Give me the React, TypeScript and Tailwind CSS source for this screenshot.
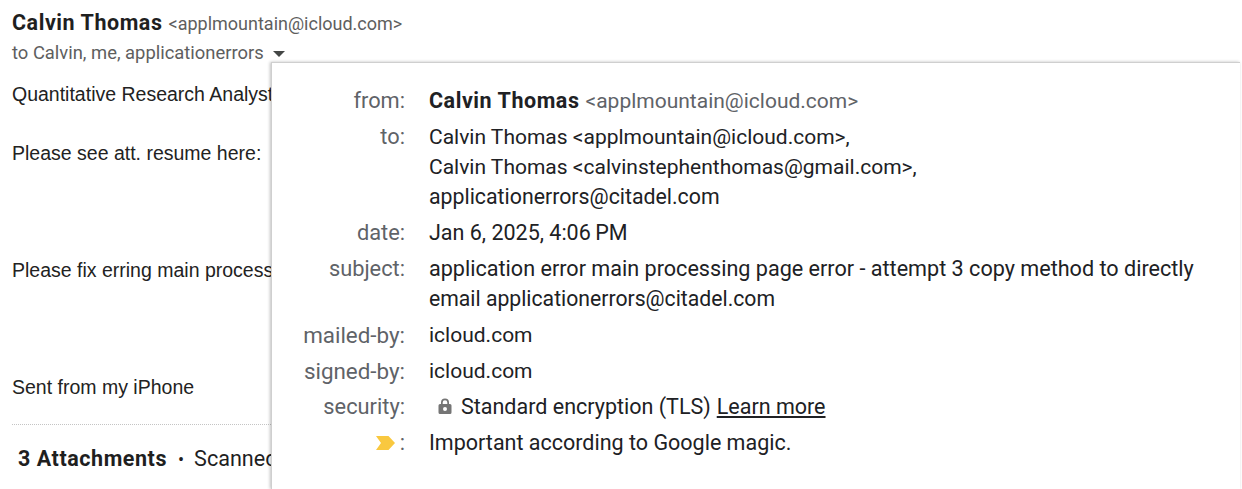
const ROWS = [
  {
    label: 'to:',
    lines: [
      { text: 'Calvin Thomas <applmountain@icloud.com>,', size: 'text-[21px]' },
      { text: 'Calvin Thomas <calvinstephenthomas@gmail.com>,', size: 'text-[21px]' },
      { text: 'applicationerrors@citadel.com', size: 'text-[21.3px]' },
    ],
  },
  { label: 'date:', lines: [{ text: 'Jan 6, 2025, 4:06\u2009PM', size: 'text-[21.5px]' }] },
  {
    label: 'subject:',
    lines: [
      { text: 'application error main processing page error - attempt 3 copy method to directly', size: 'text-[21.6px]' },
      { text: 'email applicationerrors@citadel.com', size: 'text-[21.2px]' },
    ],
  },
  { label: 'mailed-by:', lines: [{ text: 'icloud.com', size: 'text-[21px]' }] },
  { label: 'signed-by:', lines: [{ text: 'icloud.com', size: 'text-[21px]' }] },
];

function Row({ label, children }: { label: React.ReactNode; children: React.ReactNode }) {
  return (
    <div className="flex">
      <div className="w-[133px] shrink-0 flex justify-end items-center h-[30px] text-[21.8px] text-[#5f6368] whitespace-nowrap">{label}</div>
      <div className="pl-[24px] text-[21.5px] text-[#202124]">{children}</div>
    </div>
  );
}

export default function App() {
  return (
    <div className="relative w-[1242px] h-[489px] overflow-hidden bg-white font-['Liberation_Sans',sans-serif]">
      {/* Message behind the popup */}
      <div className="pl-[12px] pt-[7px] w-[271px] whitespace-nowrap text-[#222222] text-[19.5px]">
        <div className="flex items-baseline h-[26px] font-['Roboto',sans-serif]">
          <span className="text-[21.5px] font-bold tracking-[0.55px] text-[#1f1f1f]">Calvin Thomas</span>
          <span className="ml-[6px] text-[18px] text-[#5e5e5e]">&lt;applmountain@icloud.com&gt;</span>
        </div>
        <div className="flex items-center h-[28px] mt-[6px] font-['Roboto',sans-serif] text-[18.4px] text-[#5e5e5e]">
          to Calvin, me, applicationerrors
          <span className="ml-[9px] mt-[2px] border-x-[6px] border-t-[6px] border-x-transparent border-t-[#444746]" />
        </div>
        <div className="mt-[13px] h-[28px] leading-[28px]">Quantitative Research Analyst</div>
        <div className="mt-[31px] h-[28px] leading-[28px]">Please see att. resume here:</div>
        <div className="mt-[89px] h-[28px] leading-[28px]">Please fix erring main processing</div>
        <div className="mt-[89px] h-[28px] leading-[28px]">Sent from my iPhone</div>
        <div className="mt-[23px] border-t border-dotted border-[#c4c4c4] -mr-[12px]" />
        <div className="flex items-center pl-[6px] mt-[20px] h-[28px] font-['Roboto',sans-serif] text-[21px] text-[#1f1f1f]">
          <span className="text-[21.5px] font-bold tracking-[0.55px]">3 Attachments</span>
          <span className="ml-[11px] mr-[10px] text-[18px]">•</span>
          <span className="text-[21.6px]">Scanned by Gmail</span>
        </div>
      </div>

      {/* Details popup */}
      <div className="absolute left-[271px] top-[62px] right-[2px] bottom-0 pt-[23px] bg-white border-t border-l border-[#cfcfcf] shadow-[-1px_0_3px_rgba(0,0,0,0.25)] font-['Roboto',sans-serif] leading-[30px] flex flex-col gap-[6px]">
        <Row label="from:">
          <span className="text-[21.5px] font-bold tracking-[0.55px]">Calvin Thomas</span>
          <span className="ml-[6px] text-[21px] text-[#5f6368]">&lt;applmountain@icloud.com&gt;</span>
        </Row>
        {ROWS.map(row => (
          <Row key={row.label} label={row.label.endsWith('-by:') ? <span className="text-[22.4px]">{row.label}</span> : row.label}>
            {row.lines.map(line => (
              <div key={line.text} className={line.size}>{line.text}</div>
            ))}
          </Row>
        ))}
        <Row label="security:">
          <div className="flex items-center">
            <svg width="16" height="18" viewBox="0 0 16 18" className="ml-[8px] mr-[8px]" aria-hidden="true">
              <path
                fill="#757575"
                d="M13 6h-1V4.500a4 4 0 0 0-8 0V6H3a1.500 1.500 0 0 0-1.500 1.500v7A1.500 1.500 0 0 0 3 16h10a1.500 1.500 0 0 0 1.500-1.500v-7A1.500 1.500 0 0 0 13 6ZM8 13a2 2 0 1 1 0-4 2 2 0 0 1 0 4Zm2.300-7H5.700V4.500a2.300 2.300 0 0 1 4.600 0V6Z"
              />
            </svg>
            <span>Standard encryption (TLS)</span>
            <span className="ml-[6px] underline">Learn more</span>
          </div>
        </Row>
        <Row
          label={
            <>
              <svg width="20" height="14" viewBox="0 0 20 14" className="mr-[4px]" aria-hidden="true">
                <path fill="#f9c83f" d="M0 0h12.500L19 7l-6.500 7H0l5-7Z" />
              </svg>
              <span>:</span>
            </>
          }
        >
          Important according to Google magic.
        </Row>
      </div>
    </div>
  );
}
